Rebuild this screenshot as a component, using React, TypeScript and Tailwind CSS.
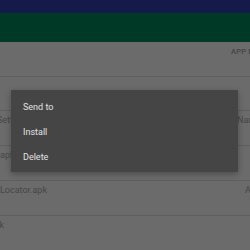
import React from "react";

const rows = [
  { name: "Settings.apk", shift: "-ml-[3px]", right: "Name", rightPad: "pl-[5px]" },
  { name: "apkExtractor.apk", shift: "ml-0", right: "", rightPad: "pl-0" },
  { name: "Locator.apk", shift: "ml-0", right: "A", rightPad: "pl-[13px]" },
  { name: "Notebook", shift: "-ml-[35px]", right: "", rightPad: "pl-0" },
];

export default function App() {
  return (
    <div className="relative w-[250px] h-[250px] overflow-hidden bg-[#6b6b6b] font-['Roboto',sans-serif]">
      {/* Status bar + toolbar (dimmed) */}
      <div className="h-[13px] bg-[#141a4a]" />
      <div className="h-[29px] bg-[#003a26]" />

      {/* Table header */}
      <div className="h-[35px] border-b border-[#5e5e5e] flex">
        <div className="w-[231px] shrink-0" />
        <span className="mt-[4px] text-[7.5px] font-medium tracking-wide text-[#454545] whitespace-nowrap">
          APP NAME
        </span>
      </div>

      {/* Empty row */}
      <div className="h-[34px] border-b border-[#5e5e5e]" />

      {rows.map((r, i) => (
        <div key={i} className="h-[35px] border-b border-[#5e5e5e] flex">
          <div className="w-[232px] shrink-0 overflow-hidden">
            <span className={`block mt-[3px] text-[9px] text-[#474747] whitespace-nowrap ${r.shift}`}>
              {r.name}
            </span>
          </div>
          <span className={`mt-[3px] text-[9px] text-[#474747] whitespace-nowrap ${r.rightPad}`}>
            {r.right}
          </span>
        </div>
      ))}

      {/* Popup menu */}
      <div className="absolute left-[11px] top-[90px] w-[227px] bg-[#454545] pt-[5px] pb-[2px] shadow-[0_2px_6px_rgba(0,0,0,0.3)]">
        {["Send to", "Install", "Delete"].map((t) => (
          <div key={t} className="h-[25px] flex items-center pl-[12px] text-[9px] text-[#e2e2e2]">
            {t}
          </div>
        ))}
      </div>
    </div>
  );
}
